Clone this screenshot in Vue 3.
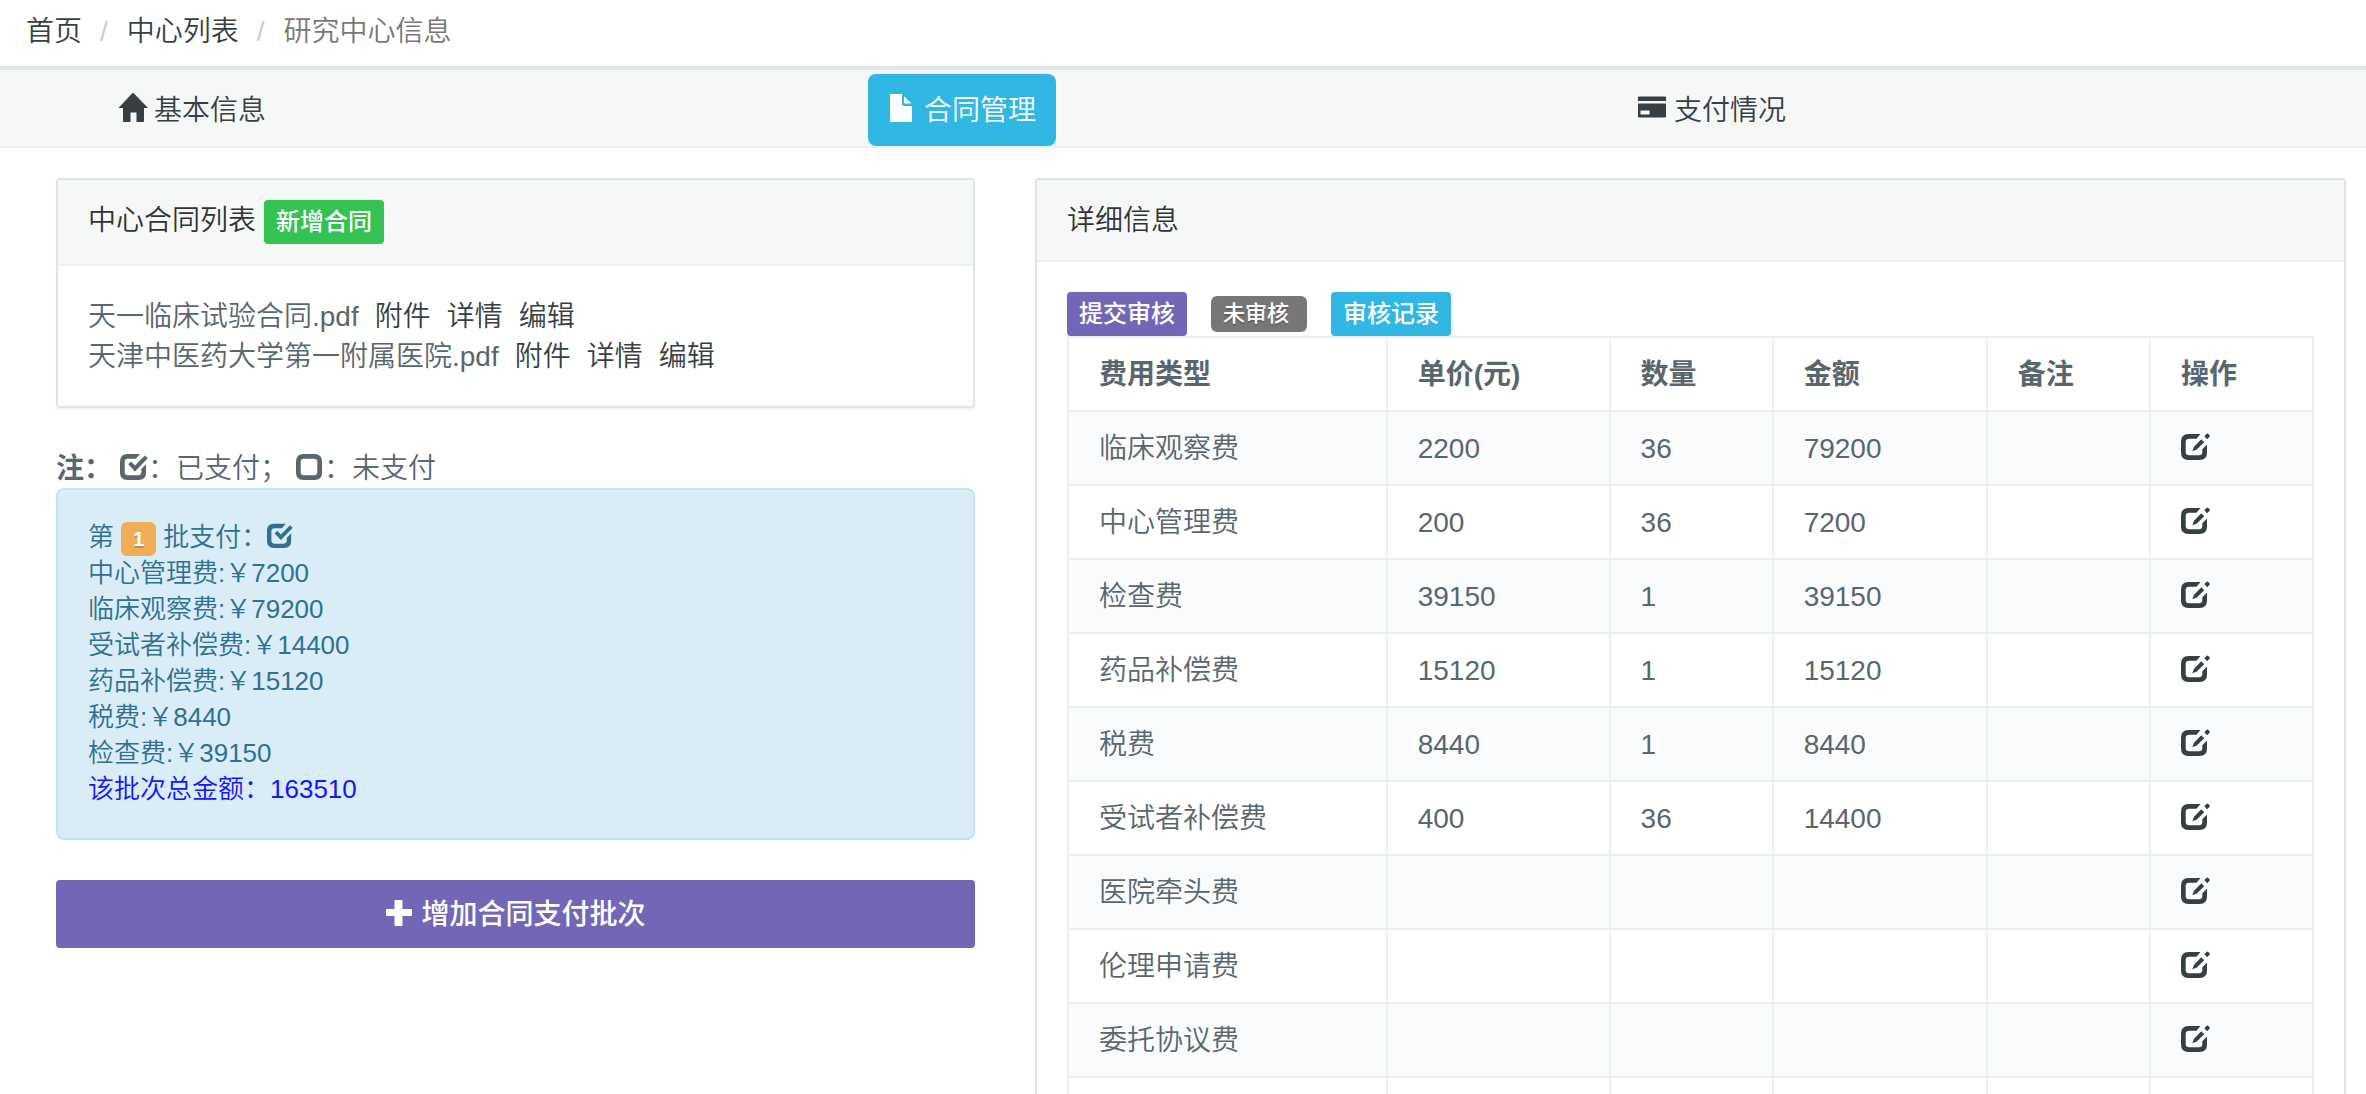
<script setup>
import { h } from 'vue'

const glyphs = {
  home: 'M14 -.4Q15 -1.4 16 -.4L30 14H26V27.2Q26 28 25 28H18.500V18.500H12.500V28H6Q5 28 5 27.200V14H0.500Z',
  file: 'M3 0H14V9.500Q14 12 16.500 12H24V27Q24 28 23 28H3Q2 28 2 27V1Q2 0 3 0ZM16 2.200L23.500 9.500H17Q16 9.500 16 8.500Z',
  card: 'M1 2.500H27Q28 2.500 28 3.500V7H0V3.500Q0 2.500 1 2.500ZM0 9.500H28V22.500Q28 23.500 27 23.500H1Q0 23.500 0 22.500ZM2.500 16.500V20.500H11.500V16.500Z',
  check: 'M20 2.100L16 6.700H8Q4.700 6.700 4.700 10V20Q4.700 23.300 8 23.300H18Q21.300 23.300 21.300 20V17L26 12.300V20.500Q26 28 18.500 28H7.500Q0 28 0 20.500V9.500Q0 2 7.500 2H19.500ZM8.200 12.300L11 9.500L15 13.500L24.800 3.400L27.700 6.200L15 19.500Z',
  box: 'M7.500 2H18.500Q26 2 26 9.500V20.500Q26 28 18.500 28H7.500Q0 28 0 20.500V9.500Q0 2 7.500 2ZM8 6.700Q4.700 6.700 4.700 10V20Q4.700 23.300 8 23.300H18Q21.300 23.300 21.300 20V10Q21.300 6.700 18 6.700Z',
  edit: 'M19.500 2L15.500 6.700H8Q4.700 6.700 4.700 10V20Q4.700 23.300 8 23.300H18Q21.300 23.300 21.300 20V17.300L26 12.500V20.500Q26 28 18.500 28H7.500Q0 28 0 20.500V9.500Q0 2 7.500 2ZM11.300 19.300L13 14.700L20.300 7.300L23.200 10.200L15.800 17.500ZM23.300 4.300L25.300 2Q26.300 1 27.300 2L28.400 3.100Q29.200 4 28.400 5L26.200 7.200Z',
  plus: 'M10.500 1H16.500Q17.500 1 17.500 2V10H26Q27 10 27 11V16Q27 17 26 17H17.500V26Q17.500 27 16.500 27H10.500Q9.500 27 9.500 26V17H2Q1 17 1 16V11Q1 10 2 10H9.500V2Q9.500 1 10.500 1Z'
}

const Icon = (props) =>
  h('svg', { class: 'icon', viewBox: '0 0 28 28', 'aria-hidden': 'true' }, [
    h('path', { d: glyphs[props.name], 'fill-rule': 'evenodd', fill: 'currentColor' })
  ])
Icon.props = ['name']

const tabs = [
  { icon: 'home', text: '基本信息' },
  { icon: 'file', text: '合同管理', active: true },
  { icon: 'card', text: '支付情况' }
]
const contracts = ['天一临床试验合同.pdf', '天津中医药大学第一附属医院.pdf']
const actions = ['附件', '详情', '编辑']
const batch = [
  ['中心管理费', 7200],
  ['临床观察费', 79200],
  ['受试者补偿费', 14400],
  ['药品补偿费', 15120],
  ['税费', 8440],
  ['检查费', 39150]
]
const columns = ['费用类型', '单价(元)', '数量', '金额', '备注', '操作']
const fees = [
  ['临床观察费', '2200', '36', '79200'],
  ['中心管理费', '200', '36', '7200'],
  ['检查费', '39150', '1', '39150'],
  ['药品补偿费', '15120', '1', '15120'],
  ['税费', '8440', '1', '8440'],
  ['受试者补偿费', '400', '36', '14400'],
  ['医院牵头费', '', '', ''],
  ['伦理申请费', '', '', ''],
  ['委托协议费', '', '', ''],
  ['', '', '', '']
]
</script>

<template>
  <div class="page">
    <nav class="breadcrumb" aria-label="breadcrumb">
      <a href="#">首页</a>
      <span class="sep">/</span>
      <a href="#">中心列表</a>
      <span class="sep">/</span>
      <span class="current">研究中心信息</span>
    </nav>

    <nav class="tabs">
      <div v-for="t in tabs" :key="t.text">
        <a href="#" class="tab" :class="{ active: t.active }"><Icon :name="t.icon" />{{ t.text }}</a>
      </div>
    </nav>

    <main class="columns">
      <div class="left">
        <section class="panel">
          <header class="panel-head">
            <span>中心合同列表</span>
            <button type="button" class="btn green">新增合同</button>
          </header>
          <div class="panel-body contracts">
            <div v-for="c in contracts" :key="c" class="contract">
              <span>{{ c }}</span>
              <a v-for="a in actions" :key="a" href="#">{{ a }}</a>
            </div>
          </div>
        </section>

        <p class="legend">
          <b>注：</b>
          <span><Icon name="check" />：已支付；</span>
          <span><Icon name="box" />：未支付</span>
        </p>
        <section class="alert">
          <div class="batch-title">
            <span>第</span><span class="label orange">1</span>
            <span class="batch-state">批支付：<Icon name="check" /></span>
          </div>
          <div v-for="b in batch" :key="b[0]">{{ b[0] }}:￥{{ b[1] }}</div>
          <div class="total">该批次总金额：163510</div>
        </section>
        <button type="button" class="btn-block"><Icon name="plus" />增加合同支付批次</button>
      </div>

      <section class="panel">
        <header class="panel-head">详细信息</header>
        <div class="panel-body">
          <div class="toolbar">
            <button type="button" class="btn purple">提交审核</button>
            <span class="label gray">未审核</span>
            <button type="button" class="btn blue">审核记录</button>
          </div>
          <table>
            <colgroup>
              <col class="w-type" /><col class="w-price" /><col class="w-small" />
              <col class="w-sum" /><col class="w-small" /><col class="w-small" />
            </colgroup>
            <thead>
              <tr><th v-for="c in columns" :key="c" scope="col">{{ c }}</th></tr>
            </thead>
            <tbody>
              <tr v-for="(f, i) in fees" :key="i">
                <td v-for="(v, j) in f" :key="j">{{ v }}</td>
                <td></td>
                <td><a href="#" aria-label="编辑"><Icon name="edit" /></a></td>
              </tr>
            </tbody>
          </table>
        </div>
      </section>
    </main>
  </div>
</template>

<style>
body {
  margin: 0;
  background: #fff;
}
</style>

<style scoped>
.page {
  height: 100vh;
  overflow: hidden;
  font: 28px/40px "Liberation Sans", "Noto Sans CJK SC", sans-serif;
  font-weight: 350;
  color: #58666e;
}
a {
  color: #363f44;
  text-decoration: none;
}
button {
  border: 0;
  font-family: inherit;
  font-weight: 500;
  color: #fff;
}
.page :deep(.icon) {
  width: 28px;
  height: 28px;
  flex: none;
  overflow: visible;
}
.breadcrumb {
  display: flex;
  padding: 12px 26px 14px;
  border-bottom: 4px solid #dee5e7;
}
.sep {
  padding: 0 19px 0 18px;
  color: #ccc;
}
.current {
  color: #777;
}
.tabs {
  display: grid;
  grid-template-columns: 770fr 750fr 748fr;
  padding: 4px 0 0 98px;
  background: #f6f8f8;
  border-bottom: 2px solid #edf1f2;
}
.tab {
  display: inline-flex;
  gap: 8px;
  padding: 17px 20px 15px;
  border-radius: 8px;
}
.tab :deep(.icon) {
  margin-top: 3px;
}
.active {
  background: #31b7e4;
  color: #fff;
}
.columns {
  display: grid;
  grid-template-columns: 919fr 1311fr;
  align-items: start;
  gap: 60px;
  padding: 30px 20px 0 56px;
}
.panel {
  border: 2px solid #dee5e7;
  border-radius: 4px;
  box-shadow: 0 2px 2px rgba(0, 0, 0, 0.05);
}
.panel-head {
  display: flex;
  gap: 8px;
  padding: 20px 30px;
  background: #f6f8f8;
  border-bottom: 2px solid #edf1f2;
  color: #333;
  line-height: 42px;
}
.panel-head:not(:has(button)) {
  padding-bottom: 18px;
}
.panel-body {
  padding: 30px;
}
.contracts {
  padding: 31px 30px 29px;
}
.btn {
  height: 44px;
  padding: 0 12px;
  border-radius: 4px;
  font-size: 24px;
  line-height: 44px;
}
.green {
  background: #34c253;
}
.purple {
  background: #7267b7;
}
.blue {
  background: #31b7e4;
}
.contract {
  display: flex;
  gap: 16px;
}
.legend {
  display: flex;
  gap: 8px;
  margin: 42px 0 0;
  line-height: 38px;
}
.legend span {
  display: flex;
}
.legend b {
  font-weight: 700;
}
.legend :deep(.icon) {
  margin-top: 2px;
}
.alert {
  padding: 29px 30px 31px;
  border: 2px solid #bbe8ef;
  border-radius: 8px;
  background: #daecf6;
  box-shadow: inset 0 2px 0 rgba(255, 255, 255, 0.2);
  color: #31708f;
  font-size: 26px;
  line-height: 36px;
}
.batch-title {
  display: flex;
  gap: 7px;
  height: 36px;
}
.batch-state {
  display: flex;
}
.batch-title :deep(.icon) {
  width: 26px;
  height: 26px;
  margin-top: 3px;
}
.total {
  color: #1414ff;
}
.label {
  border-radius: 6px;
  color: #fff;
  font-weight: 700;
  text-shadow: 0 2px 0 rgba(0, 0, 0, 0.2);
}
.orange {
  height: 34px;
  padding: 0 12px;
  margin-top: 3px;
  background: #efad56;
  font-size: 20px;
  line-height: 34px;
}
.gray {
  padding: 0 18px 0 12px;
  background: #777;
  font-size: 22px;
  font-weight: 500;
  line-height: 36px;
}
.btn-block {
  display: flex;
  justify-content: center;
  gap: 8px;
  width: 100%;
  margin-top: 40px;
  padding: 15px 14px 13px;
  border-radius: 4px;
  background: #7267b7;
  font-size: 28px;
  line-height: 40px;
}
.btn-block :deep(.icon) {
  margin-top: 4px;
}
.toolbar {
  display: flex;
  align-items: center;
  gap: 24px;
}
table {
  width: 100%;
  table-layout: fixed;
  border-collapse: collapse;
}
.w-type {
  width: 25.6%;
}
.w-price {
  width: 17.9%;
}
.w-small {
  width: 13.1%;
}
.w-sum {
  width: 17.2%;
}
th,
td {
  height: 40px;
  padding: 17px 30px 15px;
  border: 2px solid #eaeff0;
  text-align: left;
}
th {
  font-weight: 700;
}
td :deep(.icon) {
  display: block;
  margin-bottom: 6px;
}
tbody tr:nth-child(odd) {
  background: #fafbfc;
}
</style>
